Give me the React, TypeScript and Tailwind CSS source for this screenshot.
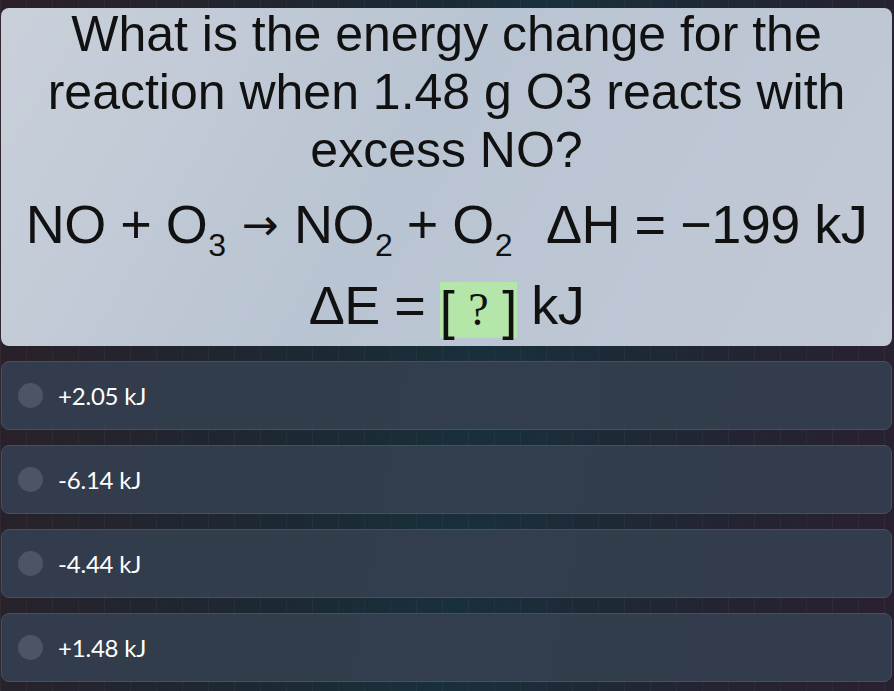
const options = ["+2.05 kJ", "-6.14 kJ", "-4.44 kJ", "+1.48 kJ"];

function Option({ label }: { label: string }) {
  return (
    <div className="flex h-[69px] items-center rounded-lg border border-[#46505e] bg-[#343e4e]/95 px-[16px]">
      <div className="h-[25px] w-[25px] shrink-0 rounded-full bg-[#4b5563]" />
      <span className="ml-[15px] font-['Lato',sans-serif] text-[24px] tracking-[-0.2px] text-white">{label}</span>
    </div>
  );
}

function Sub({ children }: { children: string }) {
  return <span className="relative top-[13px] ml-[1px] text-[32px] leading-none">{children}</span>;
}

export default function App() {
  return (
    <div className="min-h-[691px] w-full bg-[linear-gradient(90deg,rgba(255,255,255,0.035)_1px,transparent_1px),linear-gradient(100deg,#2c1f27_0%,#1d2833_35%,#18303a_55%,#232433_80%,#2a2030_100%)] bg-[size:26px_100%,100%_100%] pt-2 pl-px pr-[2px]">
      <div className="flex flex-col items-center rounded-lg bg-[linear-gradient(120deg,#c9d0da_0%,#b9c4d2_45%,#c2c9d6_100%)] pb-[8px] text-[#111]">
        <p className="-mt-[3px] px-6 text-center font-['Liberation_Sans',Arial,sans-serif] text-[50px] leading-[58px]">
          What is the energy change for the reaction when 1.48 g O3 reacts with excess NO?
        </p>
        <div className="mt-[14px] h-[62px] whitespace-nowrap font-['Liberation_Sans',Arial,sans-serif] text-[54px] leading-[62px] tracking-[-0.5px]">
          NO + O<Sub>3</Sub>
          <span className="relative -top-[3px] mx-[16px] font-['DejaVu_Sans',sans-serif] text-[44px] leading-none">→</span>
          NO<Sub>2</Sub> + O<Sub>2</Sub>
          <span className="ml-[34px]">ΔH = −199 kJ</span>
        </div>
        <div className="mt-[19px] flex items-start whitespace-nowrap font-['Liberation_Sans',Arial,sans-serif] text-[54px] leading-[62px] tracking-[-0.5px]">
          <span>ΔE =&nbsp;</span>
          <span className="mt-[8px] flex h-[56px] w-[77px] items-center justify-between bg-[#b3e6a8] leading-[56px]">
            <span className="font-light">[</span>
            <span className="font-['Liberation_Serif',serif] text-[46px]">?</span>
            <span>]</span>
          </span>
          <span>&nbsp;kJ</span>
        </div>
      </div>
      <div className="mt-[15px] flex flex-col gap-[15px]">
        {options.map((o) => (
          <Option key={o} label={o} />
        ))}
      </div>
    </div>
  );
}
